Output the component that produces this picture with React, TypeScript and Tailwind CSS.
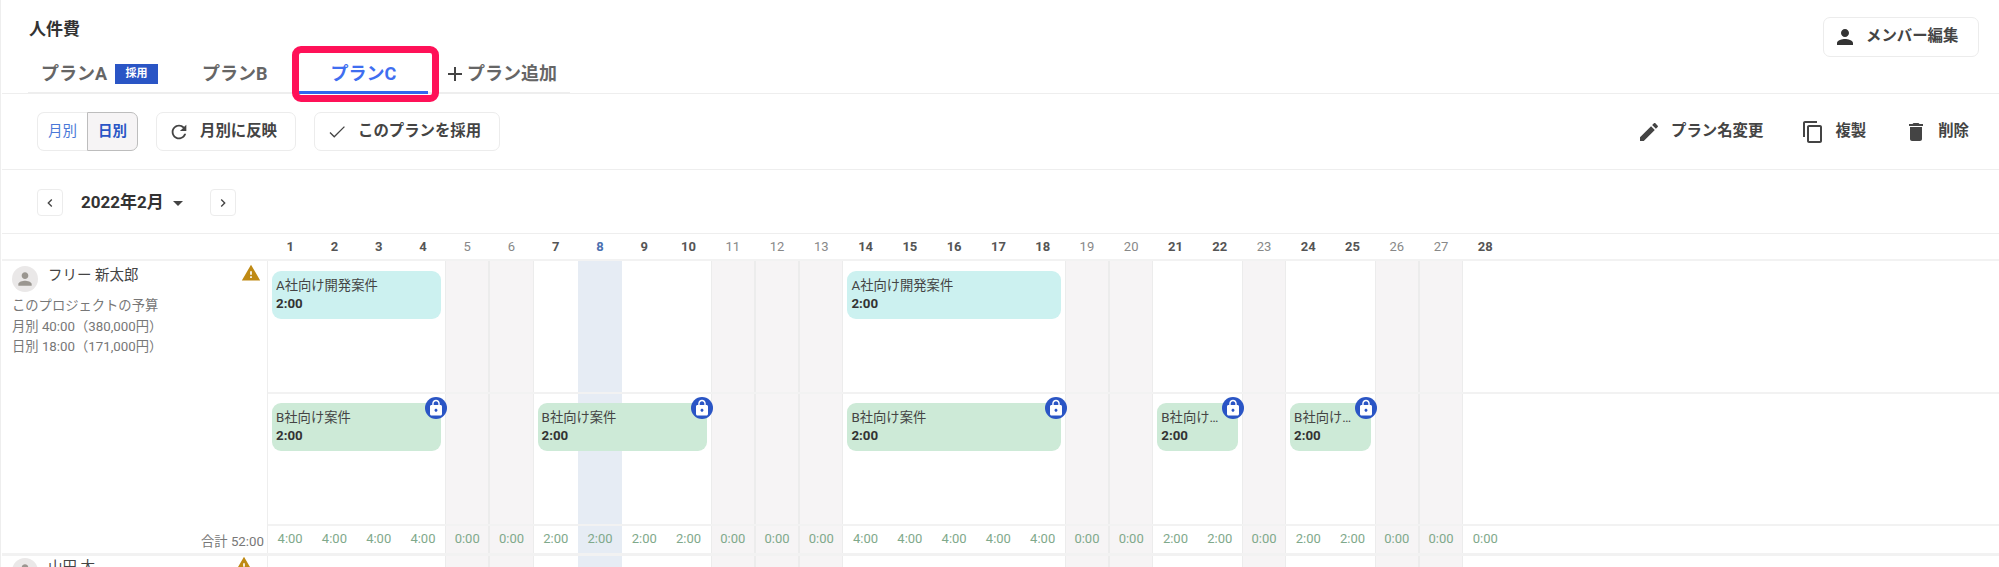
import React from "react";

const P = {
  person: "M12 12c2.21 0 4-1.79 4-4s-1.79-4-4-4-4 1.79-4 4 1.79 4 4 4zm0 2c-2.67 0-8 1.34-8 4v2h16v-2c0-2.66-5.33-4-8-4z",
  edit: "M3 17.25V21h3.75L17.81 9.94l-3.75-3.75L3 17.25zM20.71 7.04c.39-.39.39-1.02 0-1.41l-2.34-2.34c-.39-.39-1.02-.39-1.41 0l-1.83 1.83 3.75 3.75 1.83-1.83z",
  copy: "M16 1H4c-1.1 0-2 .9-2 2v14h2V3h12V1zm3 4H8c-1.1 0-2 .9-2 2v14c0 1.1.9 2 2 2h11c1.1 0 2-.9 2-2V7c0-1.1-.9-2-2-2zm0 16H8V7h11v14z",
  trash: "M6 19c0 1.1.9 2 2 2h8c1.1 0 2-.9 2-2V7H6v12zM19 4h-3.5l-1-1h-5l-1 1H5v2h14V4z",
  warn: "M1 21h22L12 2 1 21zm12-3h-2v-2h2v2zm0-4h-2v-4h2v4z",
  check: "M9 16.17L4.83 12l-1 1L9 18.2 20.6 6.6l-1-1z",
  refresh: "M17.65 6.35C16.2 4.9 14.21 4 12 4c-4.42 0-7.99 3.58-7.99 8s3.57 8 7.99 8c3.73 0 6.84-2.55 7.73-6h-2.08c-.82 2.33-3.04 4-5.65 4-3.31 0-6-2.69-6-6s2.69-6 6-6c1.66 0 3.14.69 4.22 1.78L13 11h7V4l-2.35 2.35z",
  add: "M19 13h-6v6h-2v-6H5v-2h6V5h2v6h6v2z",
  lock: "M18 8h-1V6c0-2.76-2.24-5-5-5S7 3.24 7 6v2H6c-1.1 0-2 .9-2 2v10c0 1.1.9 2 2 2h12c1.1 0 2-.9 2-2V10c0-1.1-.9-2-2-2zm-6 9c-1.1 0-2-.9-2-2s.9-2 2-2 2 .9 2 2-.9 2-2 2zm3.1-9H8.9V6c0-1.71 1.39-3.1 3.1-3.1 1.71 0 3.1 1.39 3.1 3.1v2z",
  caret: "M7 10l5 5 5-5z",
  left: "M15.41 7.41L14 6l-6 6 6 6 1.41-1.41L10.83 12z",
  right: "M10 6L8.59 7.41 13.17 12l-4.58 4.59L10 18l6-6z",
};

function Icon({ d, className }: { d: string; className: string }) {
  return (
    <svg viewBox="0 0 24 24" className={className} fill="currentColor">
      <path d={d} />
    </svg>
  );
}

const OFF = [5, 6, 11, 12, 13, 19, 20, 23, 26, 27];
const TODAY = 8;
const days = Array.from({ length: 28 }, (_, i) => i + 1);
const totals = [4, 4, 4, 4, 0, 0, 2, 2, 2, 2, 0, 0, 0, 4, 4, 4, 4, 4, 0, 0, 2, 2, 0, 2, 2, 0, 0, 0];
const barsA = [[1, 4], [14, 18]];
const barsB = [[1, 4], [7, 10], [14, 18], [21, 22], [24, 25]];

function cellClass(d: number) {
  if (OFF.includes(d)) return "bg-[#f6f4f5] border-x border-[#ececec]";
  if (d === TODAY) return "bg-[#e6ecf4]";
  return "";
}

function Bar({ from, to, color, name, lock }: { from: number; to: number; color: string; name: string; lock?: boolean }) {
  return (
    <div
      className={`relative mx-[4px] h-[48px] self-start rounded-[9px] pl-[4px] pr-[14px] pt-[6px] text-[13.3px] leading-[18px] text-[#444] ${color}`}
      style={{ gridColumn: `${from} / ${to + 1}`, gridRow: 1 }}
    >
      <div className="truncate">{name}</div>
      <div className="font-bold text-[#333]">2:00</div>
      {lock && (
        <div className="absolute -right-[6px] -top-[6px] flex h-[22px] w-[22px] items-center justify-center rounded-full bg-[#2a55c5] text-white">
          <Icon d={P.lock} className="h-[18px] w-[18px]" />
        </div>
      )}
    </div>
  );
}

function Btn({ icon, label, className }: { icon: string; label: string; className: string }) {
  return (
    <button className={`flex h-[39px] items-center rounded-[7px] border border-[#ececec] bg-white text-[15.4px] font-bold text-[#444] ${className}`}>
      <Icon d={icon} className="h-[22px] w-[22px] text-[#444]" />
      <span className="ml-[10px]">{label}</span>
    </button>
  );
}

function Action({ icon, label, className }: { icon: string; label: string; className: string }) {
  return (
    <div className={`flex items-center text-[15.4px] font-bold text-[#444] ${className}`}>
      <Icon d={icon} className="h-[24px] w-[24px] text-[#444]" />
      <span className="ml-[10px]">{label}</span>
    </div>
  );
}

export default function App() {
  return (
    <div
      className="relative h-[567px] w-[1999px] overflow-hidden border-l border-[#eeeeee] bg-white pl-px"
      style={{ fontFamily: 'Roboto, "Noto Sans CJK JP", sans-serif' }}
    >
      {/* Title + tabs */}
      <div className="relative h-[94px] border-b border-[#eeeeee]">
        <div className="flex justify-between pl-[27px] pr-[20px]">
          <h1 className="pt-[19px] text-[17px] font-bold leading-[20px] text-[#333]">人件費</h1>
          <button className="mt-[17px] flex h-[40px] w-[156px] items-center rounded-[7px] border border-[#ececec] pl-[9px] text-[15.4px] font-bold text-[#444]">
            <Icon d={P.person} className="h-[24px] w-[24px] text-[#333]" />
            <span className="ml-[9px]">メンバー編集</span>
          </button>
        </div>
        <div className="absolute left-[26px] top-[62px] flex h-[32px] w-[542px] items-start whitespace-nowrap border-b-2 border-[#eeeeee] text-[18px] font-bold leading-[24px] text-[#666]">
          <div className="ml-[13px] flex w-[118px] items-center">
            <span className="shrink-0">プランA</span>
            <span className="ml-[8px] flex h-[20px] w-[43px] shrink-0 items-center justify-center bg-[#2a55c5] text-[11px] font-bold text-white">採用</span>
          </div>
          <div className="ml-[43px] w-[68px]">プランB</div>
          <div className="ml-[30px] h-[32px] w-[129px] -translate-x-px border-b-[3px] border-[#3366ee] text-center text-[#3f6ef0]">プランC</div>
          <div className="ml-[14px] flex items-center">
            <Icon d={P.add} className="h-[24px] w-[24px] text-[#444]" />
            プラン追加
          </div>
        </div>
        <div className="absolute left-[290px] top-[46px] h-[56px] w-[147px] rounded-[9px] border-[7px] border-[#ff1158]" />
      </div>

      {/* Toolbar */}
      <div className="flex h-[76px] items-start justify-between border-b border-[#eeeeee] pl-[35px] pt-[18px]">
        <div className="flex items-center">
          <div className="flex h-[39px] w-[101px] text-[14.5px]">
            <div className="flex w-[50px] items-center justify-center rounded-l-[7px] border border-r-0 border-[#ececec] text-[#4a78d8]">月別</div>
            <div className="flex w-[51px] items-center justify-center rounded-r-[7px] border border-[#bdbdbd] bg-[#f6f4f5] font-bold text-[#2a55c5]">日別</div>
          </div>
          <Btn icon={P.refresh} label="月別に反映" className="ml-[18px] w-[140px] pl-[11px]" />
          <Btn icon={P.check} label="このプランを採用" className="ml-[18px] w-[186px] pl-[11px]" />
        </div>
        <div className="flex h-[39px] items-center pr-[30px]">
          <Action icon={P.edit} label="プラン名変更" className="" />
          <Action icon={P.copy} label="複製" className="ml-[38px]" />
          <Action icon={P.trash} label="削除" className="ml-[38px]" />
        </div>
      </div>

      {/* Month switcher */}
      <div className="flex h-[64px] items-start border-b border-[#eeeeee] pl-[35px] pt-[19px]">
        <button className="flex h-[27px] w-[26px] items-center justify-center rounded-[4px] border border-[#ececec] text-[#444]">
          <Icon d={P.left} className="h-[16px] w-[16px]" />
        </button>
        <div className="ml-[18px] flex h-[27px] items-center text-[17px] font-bold text-[#333]">
          2022年2月
          <Icon d={P.caret} className="ml-[2px] h-[24px] w-[24px] text-[#444]" />
        </div>
        <button className="ml-[20px] flex h-[27px] w-[26px] items-center justify-center rounded-[4px] border border-[#ececec] text-[#444]">
          <Icon d={P.right} className="h-[16px] w-[16px]" />
        </button>
      </div>

      {/* Day header */}
      <div className="flex h-[27px] border-b-2 border-[#f2f2f2]">
        <div className="w-[266px] shrink-0" />
        <div className="grid grid-cols-[repeat(28,44.28px)] text-center text-[13px] leading-[26px]">
          {days.map((d) => (
            <div
              key={d}
              className={
                d === TODAY
                  ? "font-bold text-[#4a70b0]"
                  : OFF.includes(d)
                    ? "text-[#888]"
                    : "font-bold text-[#555]"
              }
            >
              {d}
            </div>
          ))}
        </div>
      </div>

      {/* Person 1 */}
      <div className="flex h-[295px] border-b-[3px] border-[#f2f2f2]">
        <div className="flex w-[266px] shrink-0 flex-col border-r border-[#eeeeee] pl-[10px] pr-[3px] text-[13.3px] leading-[20.5px] text-[#777]">
          <div className="flex items-start pr-[3px] pt-[5px]">
            <div className="flex h-[26px] w-[26px] items-center justify-center rounded-full bg-[#eae8e8] text-[#9a9690]">
              <Icon d={P.person} className="h-[20px] w-[20px]" />
            </div>
            <span className="ml-[10px] text-[14.5px] leading-[20px] text-[#444]">フリー 新太郎</span>
            <Icon d={P.warn} className="-mt-[3px] ml-auto h-[20px] w-[20px] text-[#bf8a14]" />
          </div>
          <div className="mt-[4px]">このプロジェクトの予算</div>
          <div>月別 40:00（380,000円）</div>
          <div>日別 18:00（171,000円）</div>
          <div className="mt-auto pb-[1px] text-right">合計 52:00</div>
        </div>
        <div className="flex min-w-0 flex-1 flex-col">
          <div className="h-[133px] border-b-2 border-[#f2f2f2]">
            <div className="grid h-full grid-cols-[repeat(28,44.28px)] [grid-template-rows:100%]">
              {days.map((d) => (
                <div key={d} className={cellClass(d)} style={{ gridColumn: d, gridRow: 1 }} />
              ))}
              {barsA.map(([a, b]) => (
                <Bar key={a} from={a} to={b} color="mt-[10px] bg-[#ccf1f0]" name="A社向け開発案件" />
              ))}
            </div>
          </div>
          <div className="h-[132px] border-b-2 border-[#f2f2f2]">
            <div className="grid h-full grid-cols-[repeat(28,44.28px)] [grid-template-rows:100%]">
              {days.map((d) => (
                <div key={d} className={cellClass(d)} style={{ gridColumn: d, gridRow: 1 }} />
              ))}
              {barsB.map(([a, b]) => (
                <Bar key={a} from={a} to={b} color="mt-[9px] bg-[#cdead7]" name="B社向け案件" lock />
              ))}
            </div>
          </div>
          <div className="grid h-[27px] grid-cols-[repeat(28,44.28px)] text-center text-[13px] leading-[25px] text-[#7fa98b]">
            {days.map((d, i) => (
              <div key={d} className={cellClass(d)}>{totals[i]}:00</div>
            ))}
          </div>
        </div>
      </div>

      {/* Person 2 */}
      <div className="flex h-[11px]">
        <div className="w-[266px] shrink-0 border-r border-[#eeeeee] pl-[10px] pr-[13px] pt-[2px]">
          <div className="flex items-start">
            <div className="flex h-[26px] w-[26px] shrink-0 items-center justify-center rounded-full bg-[#eae8e8] text-[#9a9690]">
              <Icon d={P.person} className="h-[20px] w-[20px]" />
            </div>
            <span className="ml-[10px] text-[14.5px] leading-[20px] text-[#444]">山田 太</span>
            <Icon d={P.warn} className="-mt-[3px] ml-auto h-[20px] w-[20px] text-[#bf8a14]" />
          </div>
        </div>
        <div className="grid h-full grid-cols-[repeat(28,44.28px)]">
          {days.map((d) => (
            <div key={d} className={cellClass(d)} />
          ))}
        </div>
      </div>
    </div>
  );
}
